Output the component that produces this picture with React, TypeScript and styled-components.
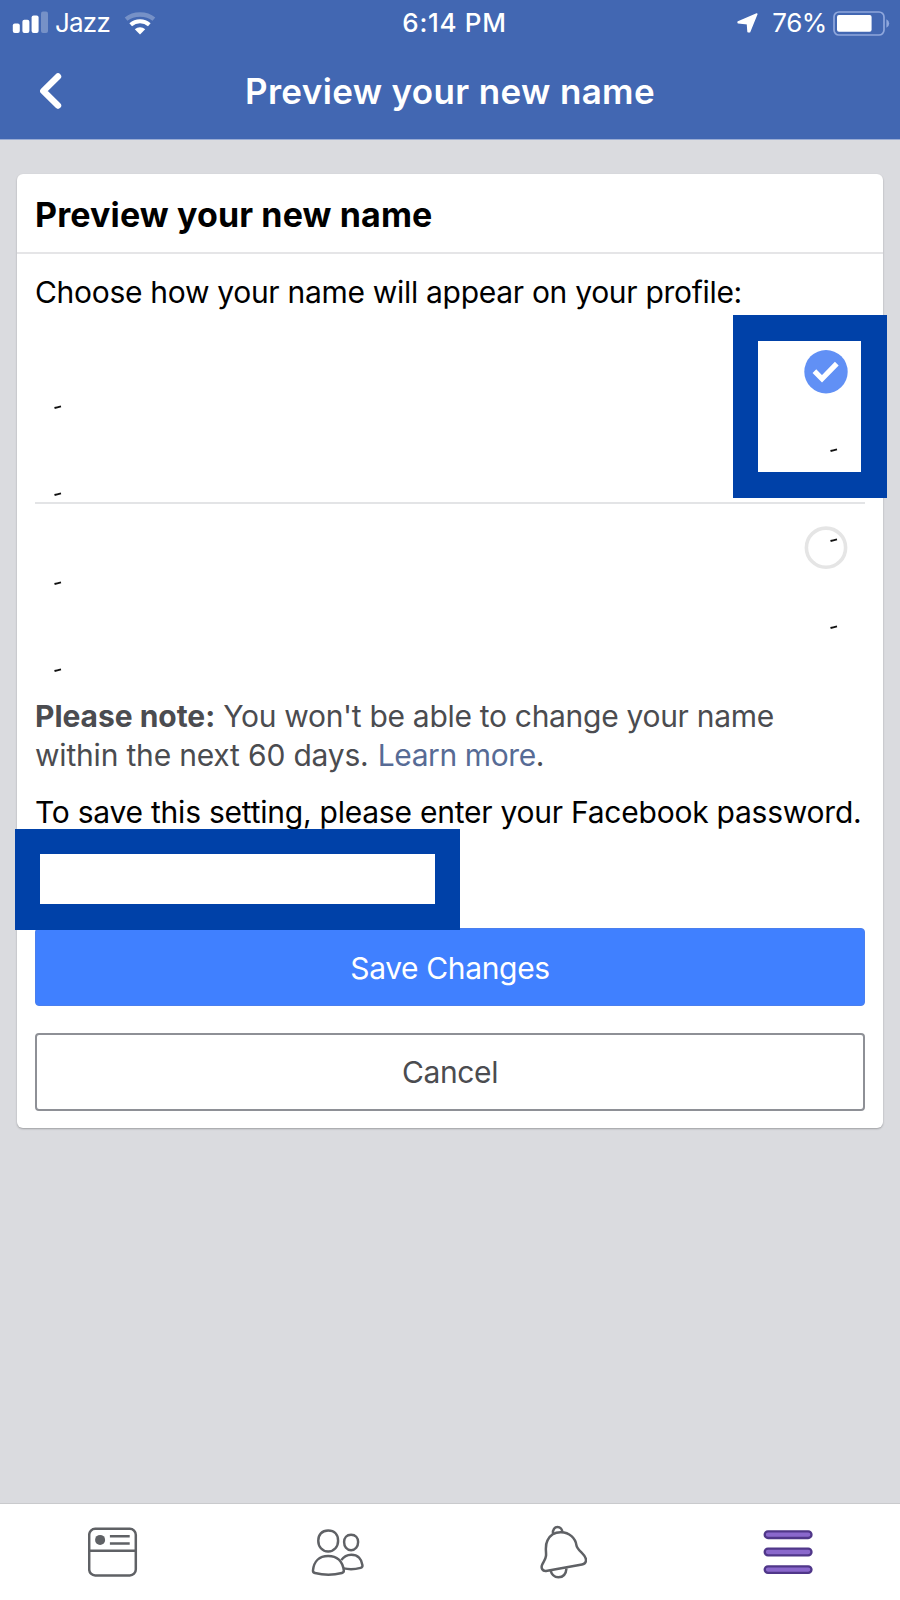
import React from 'react';
import styled, { createGlobalStyle } from 'styled-components';

const GlobalStyle = createGlobalStyle`
  *, *::before, *::after { box-sizing: border-box; }
  body { margin: 0; background: #dadbdf; }
  p, h1, h2 { margin: 0; }
`;

const Screen = styled.div`
  width: 900px;
  height: 1600px;
  display: flex;
  flex-direction: column;
  overflow: hidden;
  background: #dadbdf;
  color: #000;
  font-family: Inter, 'Liberation Sans', sans-serif;
  font-size: 30px;
`;

const Header = styled.header`
  flex: none;
  height: 140px;
  background: #4267b2;
  border-bottom: 1px solid #9aacd4;
  color: #fff;
`;

const StatusBar = styled.div`
  display: grid;
  grid-template-columns: 1fr auto 1fr;
  align-items: center;
  height: 46px;
  padding: 0 10px 0 12px;
  font-size: 26px;
  line-height: 46px;
`;

const StatusGroup = styled.div<{ $end?: boolean }>`
  display: flex;
  align-items: center;
  justify-content: ${(p) => (p.$end ? 'flex-end' : 'flex-start')};
`;

const Carrier = styled.span`
  margin: 0 14px 0 7px;
  letter-spacing: -0.8px;
`;

const Clock = styled.span`
  padding-left: 7px;
  font-weight: 500;
  letter-spacing: 0.7px;
`;

const Percent = styled.span`
  margin: 0 6px 0 14px;
  letter-spacing: -0.4px;
`;

const TitleBar = styled.div`
  display: grid;
  grid-template-columns: 100px 1fr 100px;
  align-items: center;
  height: 90px;
`;

const BackButton = styled.button`
  display: flex;
  align-items: center;
  height: 90px;
  padding: 0 0 0 38px;
  border: 0;
  background: none;
`;

const Title = styled.h1`
  text-align: center;
  font-size: 35px;
  font-weight: 600;
  line-height: 44px;
  letter-spacing: 0.35px;
`;

const Main = styled.main`
  flex: 1;
  padding: 34px 17px 0;
`;

const Card = styled.section`
  height: 954px;
  border-radius: 6px;
  background: #fff;
  box-shadow: 0 1px 2px rgba(0, 0, 0, 0.28);
`;

const CardTitle = styled.h2`
  height: 80px;
  padding: 0 18px;
  border-bottom: 2px solid #e5e5e7;
  font-size: 34px;
  font-weight: 700;
  line-height: 81px;
  letter-spacing: 0.12px;
`;

const CardBody = styled.div`
  padding: 19px 18px 0;
`;

const Intro = styled.p`
  height: 42px;
  line-height: 39px;
  letter-spacing: -0.3px;
`;

const Option = styled.div<{ $divided?: boolean }>`
  position: relative;
  display: flex;
  justify-content: space-between;
  height: ${(p) => (p.$divided ? '189px' : '193px')};
  padding: ${(p) => (p.$divided ? '35px' : '22px')} 17px 0 19px;
  border-bottom: ${(p) => (p.$divided ? '2px solid #e3e4e6' : '0')};
`;

const NameColumn = styled.div<{ $top: number }>`
  display: flex;
  flex-direction: column;
  gap: 83px;
  padding-top: ${(p) => p.$top}px;
`;

const ChoiceColumn = styled.div<{ $gap: number }>`
  position: relative;
  display: flex;
  flex-direction: column;
  align-items: center;
  gap: ${(p) => p.$gap}px;
  width: 44px;
`;

const DashSlot = styled.span`
  display: flex;
  margin-left: 16px;
`;

const InnerDash = styled.span`
  position: absolute;
  top: 12px;
  left: 26px;
  display: flex;
`;

const SelectionFrame = styled.div`
  position: absolute;
  top: 0;
  right: -22px;
  width: 154px;
  height: 183px;
  border: solid #0041a8;
  border-width: 26px 26px 26px 25px;
`;

const Note = styled.p`
  color: #4b4c50;
  line-height: 39.3px;
  letter-spacing: -0.3px;
`;

const NoteLabel = styled.strong`
  font-weight: 700;
  letter-spacing: -0.04px;
`;

const NoteLine = styled.span`
  letter-spacing: -0.19px;
`;

const Link = styled.a`
  margin-left: 1px;
  color: #576b95;
  letter-spacing: -0.4px;
`;

const PasswordPrompt = styled.p`
  margin-top: 17px;
  line-height: 39px;
  letter-spacing: -0.235px;
  white-space: nowrap;
`;

const PasswordField = styled.div`
  position: relative;
  width: 445px;
  height: 101px;
  margin: -3px 0 -2px -20px;
  border: solid #0041a8;
  border-width: 25px 25px 26px;
  background: #fff;
`;

const Button = styled.button<{ $primary?: boolean }>`
  display: block;
  width: 100%;
  height: 78px;
  margin-bottom: 27px;
  padding: ${(p) => (p.$primary ? '2px' : '1px')} 0 0;
  border: ${(p) => (p.$primary ? '1px solid #4a7fee' : '2px solid #8e9096')};
  border-radius: 4px;
  background: ${(p) => (p.$primary ? '#4080ff' : '#fff')};
  color: ${(p) => (p.$primary ? '#fff' : '#4b4c50')};
  font-family: inherit;
  font-size: 30px;
  letter-spacing: -0.36px;
`;

const TabBar = styled.nav`
  flex: none;
  display: grid;
  grid-template-columns: repeat(4, 1fr);
  height: 97px;
  border-top: 1px solid #c9cacd;
  background: #fff;
`;

const Tab = styled.a`
  display: flex;
  justify-content: center;
  padding-top: 21px;
`;

const SignalIcon = () => (
  <svg width="36" height="24" viewBox="0 0 36 24" fill="#fff">
    <rect x="0.8" y="12.5" width="7" height="9.5" rx="2" />
    <rect x="10.4" y="8.7" width="7" height="13.3" rx="2" />
    <rect x="19.6" y="4.4" width="7" height="17.6" rx="2" />
    <rect x="29" y="0.5" width="7" height="21.5" rx="2" opacity="0.28" />
  </svg>
);

const WifiIcon = () => (
  <svg width="32" height="23" viewBox="0 0 32 23" fill="none" stroke="#fff">
    <path d="M2.1 7.1C9.8 .9 22.2 .9 29.9 7.1" strokeWidth="4.4" opacity="0.28" />
    <path d="M6.7 12.7C12 8 20 8 25.3 12.7" strokeWidth="4" />
    <path d="M10.8 17.2C13.8 14.5 18.2 14.5 21.2 17.2L16 22.4Z" fill="#fff" stroke="none" />
  </svg>
);

const LocationIcon = () => (
  <svg width="21" height="21" viewBox="0 0 21 21" fill="#fff" stroke="#fff" strokeWidth="1.6" strokeLinejoin="round">
    <path d="M19.8 1L12.6 18.8H11.1L10.5 10.8L1.2 9.8V9Z" />
  </svg>
);

const BatteryIcon = () => (
  <svg width="57" height="25" viewBox="0 0 57 25">
    <rect x="1" y="1" width="50" height="23" rx="5" fill="none" stroke="#8fa7dc" strokeWidth="1.7" />
    <rect x="4" y="4" width="34.6" height="16.8" rx="2" fill="#fff" />
    <path d="M53.4 8.3Q56.2 9.5 56.2 12.5T53.4 16.7Z" fill="#8fa7dc" />
  </svg>
);

const BackIcon = () => (
  <svg width="26" height="38" viewBox="0 0 26 38" fill="none" stroke="#fff" strokeWidth="6.4" strokeLinecap="round" strokeLinejoin="round">
    <path d="M20 4.4L5.3 19L20 33.6" />
  </svg>
);

const Dash = () => (
  <svg width="8" height="4" viewBox="0 0 8 4" fill="none" stroke="#111" strokeWidth="1.9">
    <path d="M.5 3C2.5 2.4 4.5 1.9 7 1.3" />
  </svg>
);

const CheckedIcon = () => (
  <svg width="44" height="44" viewBox="0 0 44 44">
    <circle cx="22" cy="21.7" r="21.7" fill="#6190f5" />
    <path d="M10.4 21.2L18 28.9L32.8 13.6" fill="none" stroke="#fff" strokeWidth="5.2" />
  </svg>
);

const UncheckedIcon = () => (
  <svg width="44" height="44" viewBox="0 0 44 44">
    <circle cx="22" cy="21.7" r="19.6" fill="none" stroke="#e5e5e5" strokeWidth="3.6" />
  </svg>
);

const FeedIcon = () => (
  <svg width="50" height="54" viewBox="0.7 0 50 54" fill="none" stroke="#5f6165" strokeWidth="2.5">
    <rect x="1.9" y="3.8" width="46.6" height="46.6" rx="6" />
    <path d="M1.9 25.7H48.5M22.6 11.3H42.4M22.6 18.4H42.4" />
    <circle cx="12.8" cy="14.9" r="5" fill="#5f6165" stroke="none" />
  </svg>
);

const FriendsIcon = () => (
  <svg width="54" height="54" viewBox="0 0 55 55" fill="none" stroke="#5f6165" strokeWidth="2.5" strokeLinejoin="round">
    <path d="M17.5 5.6C24 5.6 27.6 10 27.6 16S23.8 27 17.5 27S7.4 22 7.4 16S11 5.6 17.5 5.6Z" />
    <path d="M40.8 9.9C45.3 9.9 48 13 48 17.4S45.2 25.7 40.8 25.7S33.7 21.8 33.7 17.4S36.4 9.9 40.8 9.9Z" />
    <path d="M17.5 31.5C26.5 31.5 32.2 37 33.4 46.3C33.6 47.8 33 48.5 31.5 48.9C23 51 12.5 51 4 48.9C2.5 48.5 1.9 47.8 2 46.3C2.8 37 8.5 31.5 17.5 31.5Z" />
    <path d="M30.8 35.8C33.4 32 37 30.2 41 30.2C47.7 30.2 51.7 34.5 52.4 41C52.6 42.6 52 43.3 50.5 43.7C45.5 45 38 45.2 33.2 44.2" />
  </svg>
);

const BellIcon = () => (
  <svg width="48" height="54" viewBox="-1 0 48 54" fill="none" stroke="#5f6165" strokeWidth="2.5" strokeLinejoin="round">
    <path d="M6 45.9C2.5 46.3 .8 43.1 2.1 39.9C3.3 36.9 5.6 34.6 6 30.9C6.5 26.6 4.5 21.1 7.5 15.4C10 10.3 15 7.2 21 7.3C29.5 7.5 35.4 13.1 36.4 20.1C37.2 25.9 45.6 28.8 46 34.8C46.1 37.6 44.8 38.9 42 39.4Z" />
    <path d="M13 8.6C12.6 4.5 14.7 2 17.5 2S22.4 4.1 22.3 7.5" />
    <path d="M10.6 45.5C11.7 49.8 14.5 52.2 18.4 52.2C22.7 52.2 26 49.1 26.5 43.3" />
  </svg>
);

const MenuIcon = () => (
  <svg width="50" height="54" viewBox="0 0 50 54" fill="#8a68cc" stroke="#503789" strokeWidth="2.3">
    <rect x="1.7" y="6.4" width="46.8" height="6.6" rx="3.3" />
    <rect x="1.7" y="23.7" width="46.8" height="6.6" rx="3.3" />
    <rect x="1.7" y="41.3" width="46.8" height="6.6" rx="3.3" />
  </svg>
);

export default function App() {
  return (
    <Screen>
      <GlobalStyle />
      <Header>
        <StatusBar>
          <StatusGroup>
            <SignalIcon />
            <Carrier>Jazz</Carrier>
            <WifiIcon />
          </StatusGroup>
          <Clock>6:14 PM</Clock>
          <StatusGroup $end>
            <LocationIcon />
            <Percent>76%</Percent>
            <BatteryIcon />
          </StatusGroup>
        </StatusBar>
        <TitleBar>
          <BackButton aria-label="Back">
            <BackIcon />
          </BackButton>
          <Title>Preview your new name</Title>
        </TitleBar>
      </Header>

      <Main>
        <Card>
          <CardTitle>Preview your new name</CardTitle>
          <CardBody>
            <Intro>Choose how your name will appear on your profile:</Intro>

            <Option $divided>
              <NameColumn $top={55}>
                <Dash />
                <Dash />
              </NameColumn>
              <ChoiceColumn $gap={54}>
                <CheckedIcon />
                <DashSlot>
                  <Dash />
                </DashSlot>
              </ChoiceColumn>
              <SelectionFrame />
            </Option>

            <Option>
              <NameColumn $top={55}>
                <Dash />
                <Dash />
              </NameColumn>
              <ChoiceColumn $gap={55}>
                <UncheckedIcon />
                <InnerDash>
                  <Dash />
                </InnerDash>
                <DashSlot>
                  <Dash />
                </DashSlot>
              </ChoiceColumn>
            </Option>

            <Note>
              <NoteLabel>Please note:</NoteLabel> You won't be able to change your name
              <br />
              <NoteLine>within the next 60 days.</NoteLine> <Link>Learn more</Link>.
            </Note>

            <PasswordPrompt>To save this setting, please enter your Facebook password.</PasswordPrompt>
            <PasswordField />

            <Button $primary>Save Changes</Button>
            <Button>Cancel</Button>
          </CardBody>
        </Card>
      </Main>

      <TabBar>
        <Tab><FeedIcon /></Tab>
        <Tab><FriendsIcon /></Tab>
        <Tab><BellIcon /></Tab>
        <Tab><MenuIcon /></Tab>
      </TabBar>
    </Screen>
  );
}
